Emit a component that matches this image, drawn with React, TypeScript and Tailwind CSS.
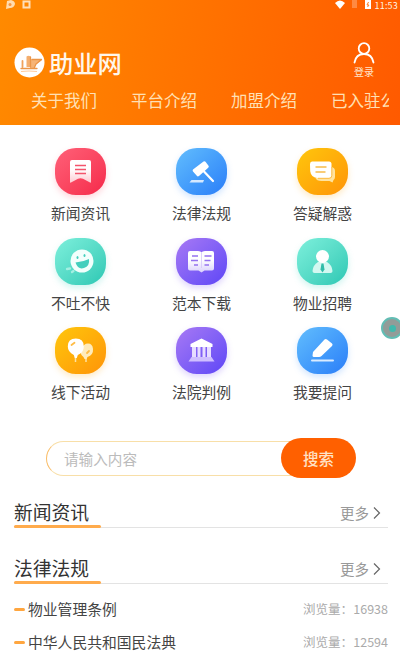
import type { ReactNode } from 'react';

const navItems = ['关于我们', '平台介绍', '加盟介绍', '已入驻公'];

const RED = 'bg-linear-to-br from-[#ff5f78] to-[#f5264a] shadow-[0_3px_6px_#ff5f7840]';
const BLUE = 'bg-linear-to-br from-[#62bdfd] to-[#2b7df8] shadow-[0_3px_6px_#4a9dff40]';
const YELLOW = 'bg-linear-to-br from-[#ffc60c] to-[#ff9408] shadow-[0_3px_6px_#ffb02040]';
const TEAL = 'bg-linear-to-br from-[#7cf0dc] to-[#28c8b4] shadow-[0_3px_6px_#48d8c440]';
const PURPLE = 'bg-linear-to-br from-[#a878f4] to-[#6044f6] shadow-[0_3px_6px_#8058f840]';

type Entry = { label: string; tone: string; art: ReactNode };

const entries: Entry[] = [
  {
    label: '新闻资讯',
    tone: RED,
    art: (
      <>
        <path d="M15 14q0-2 2-2h17q2 0 2 2v20q0 1-1 .4l-7-3.6q-2.500-1-5 0l-7 3.600q-1 .6-1-.4z" fill="url(#fade)" />
        <path d="M20 17.500h11M20 21.500h11M20 25.500h11" stroke="#f4546c" strokeWidth="1.300" />
      </>
    ),
  },
  {
    label: '法律法规',
    tone: BLUE,
    art: (
      <>
        <path d="M17 21.500 27.500 13.500q1.200-.8 2 .3l3 4q.8 1.200-.3 2L23 28q-1.300 1-2.200-.2L17 23.500q-.8-1 0-2z" fill="#fff" />
        <path d="m28 23.500 9 9.500" stroke="#fff" strokeWidth="2.200" strokeLinecap="round" />
        <path d="M15.500 32H28l-1 2.500H13.500z" fill="#d5e9ff" />
      </>
    ),
  },
  {
    label: '答疑解惑',
    tone: YELLOW,
    art: (
      <>
        <path d="M35 19q3 1 3 4v6q0 2-1.500 3l-1 2.500-3-1.500h-8q-5 0-6-3z" fill="#ffe3a0" />
        <path d="M15 13.500h17q2.500 0 2.500 2.500v11.500q0 2.500-2.500 2.500H21q-7 0-7.800-7L13 16q0-2.500 2-2.500z" fill="#fff" />
        <path d="M34.800 19v8.500q0 2.800-2.800 2.800H21" stroke="#fbb02a" strokeWidth=".8" />
        <path d="M18.500 19h11M18.500 24h10" stroke="#f8bc4a" strokeWidth="1.500" />
      </>
    ),
  },
  {
    label: '不吐不快',
    tone: TEAL,
    art: (
      <>
        <circle cx="27" cy="23" r="11.500" fill="#f2fffc" />
        <path d="M20.500 24.500q7-.3 13.500-3.500 1 7-5 9t-8.500-5.500z" fill="#43cfbd" />
        <ellipse cx="22.500" cy="19.500" rx="1" ry="1.500" fill="#43cfbd" />
        <ellipse cx="29.500" cy="17.500" rx="1" ry="1.500" fill="#43cfbd" />
        <path d="m12 31 3-.5M17 34l1.500-1" stroke="#a4efe2" strokeWidth="2.300" strokeLinecap="round" />
      </>
    ),
  },
  {
    label: '范本下载',
    tone: PURPLE,
    art: (
      <>
        <path d="M14 13h8q3 0 3.500 1.500Q26 13 29 13h7q2 0 2 2v15.500q0 2-2 2h-7.500l-3 2-3-2H14q-2 0-2-2V15q0-2 2-2z" fill="url(#fade)" />
        <path d="M16 18h6M15 22.500h7M18 27h4M28.500 18h7M28.500 22.500h6M28.500 27h4.500" stroke="#9572ef" strokeWidth="1.500" />
        <path d="M25.500 15v15" stroke="#d5c7fa" strokeWidth=".8" />
      </>
    ),
  },
  {
    label: '物业招聘',
    tone: TEAL,
    art: (
      <>
        <path d="M21 24h9q5 3 5.500 9 0 2-2 2h-16q-2 0-2-2 .5-6 5.500-9z" fill="#d3f8f1" />
        <circle cx="25.500" cy="18.500" r="6.500" fill="#fff" />
        <path d="m24.500 25.500-1 6 2 3 2-3-1-6z" fill="#31bca9" />
      </>
    ),
  },
  {
    label: '线下活动',
    tone: YELLOW,
    art: (
      <>
        <path d="M20.500 25v10M31 27v8" stroke="#ffe2a0" strokeWidth="1.500" />
        <path d="M38 22q.5 6-5.500 8l-1 2h-2l-1-2q-4-3-2-8 2-5.500 6.500-5.500t5 5.500z" fill="#ffebbb" />
        <path d="M28.800 19.500q0 6-6 8.500l-1 3h-2l-1-3q-6-3-6-8.500 0-8 8-8t8 8z" fill="#fff" />
        <path d="m16.500 18 3-2.200M32 26l2-2" stroke="#ffbc45" strokeWidth="1.800" strokeLinecap="round" />
      </>
    ),
  },
  {
    label: '法院判例',
    tone: PURPLE,
    art: (
      <>
        <path d="m25.500 11.500 11 5.500v3h-22v-3z" fill="#fff" />
        <path d="M16 20h4v10h-4zM21.500 20h3v10h-3zM26.500 20h3v10h-3zM31 20h4v10h-4z" fill="#e7ddff" />
        <path d="M15.500 30h20l3 4.500h-26z" fill="#cfbfff" />
      </>
    ),
  },
  {
    label: '我要提问',
    tone: BLUE,
    art: (
      <>
        <path d="m16 25 11.500-12.500q1.200-1.200 2.500 0l5 4q1.200 1.200 0 2.500L24.500 29q-1 1-2.500 1h-5q-1.500 0-1.500-1.500z" fill="#fff" />
        <path d="M15 33.500h21" stroke="#d9ebff" strokeWidth="2" strokeLinecap="round" />
      </>
    ),
  },
];

const articles = [
  { title: '物业管理条例', views: '16938' },
  { title: '中华人民共和国民法典', views: '12594' },
];

function StatusBar() {
  return (
    <div className="flex h-[11px] items-start justify-between pl-[5px] pr-[2px] text-[#fff3e4]">
      <svg width="28" height="10" viewBox="0 0 28 10">
        <path d="M2 1 6 0q4 1 4 4-1 4-5 4L1 9z" fill="#ffdcae" />
        <circle cx="5" cy="4.500" r="1.500" fill="#f79540" />
        <rect x="18.500" y="1.500" width="6" height="6" fill="none" stroke="#ffdfb8" strokeWidth="2" />
      </svg>
      <div className="flex items-start">
        <svg width="40" height="10" viewBox="0 0 40 10">
          <path d="M0 3q5-5 10 0L5 9z" fill="#fff" />
          <path d="M17 0h5v8h-5z" fill="#ff8a42" />
          <path d="M30 0h6v9h-6z" fill="#fff" />
          <path d="m33.500 2-1.500 3h2L32.500 7" stroke="#ff7a20" fill="none" />
        </svg>
        <span className="text-[9px] leading-[11px] tracking-[0.2px]">11:53</span>
      </div>
    </div>
  );
}

function Header() {
  return (
    <header className="flex h-[125px] flex-col bg-linear-[100deg] from-[#ff8a00] to-[#ff5a00]">
      <StatusBar />
      <div className="flex h-[73px] items-start justify-between pl-[14px] pr-[24px]">
        <div className="mt-[36px] flex items-center">
          <svg width="31" height="31" viewBox="0 0 31 31">
            <circle cx="15.500" cy="15.500" r="15" fill="#fff" />
            <path d="M8.500 14v6" stroke="#f0a25c" strokeWidth="1.800" strokeLinecap="round" />
            <path d="M12.500 9.500q2-1.500 4 0V20h-4z" fill="#f4ae6e" />
            <path d="M16.500 12.500 28 13l-6 4.500-2 3.500h-3z" fill="#f6b476" />
            <path d="M16.500 10v10M18 12.500h9.500L22 17l-2 4.500M7 21.500h16" stroke="#ec9648" strokeWidth="1.300" fill="none" strokeLinecap="round" strokeLinejoin="round" />
            <path d="M7 24.500q8-1 16 0" stroke="#ffcb9c" fill="none" />
          </svg>
          <h1 className="ml-[4px] text-[24.300px] font-medium leading-[31px] text-[#fff7eb]">助业网</h1>
        </div>
        <div className="mt-[31px] flex w-[24px] flex-col items-center">
          <svg width="22" height="22" viewBox="0 0 22 22" fill="none" stroke="#fff" strokeWidth="1.800" strokeLinecap="round">
            <circle cx="11" cy="6.500" r="5.300" />
            <path d="M1.500 20.500q1.500-8.500 9.500-8.500t9.500 8.500" />
          </svg>
          <span className="mt-[1px] whitespace-nowrap text-[10px] leading-[14px] text-[#ffe5cc]">登录</span>
        </div>
      </div>
      <nav className="ml-[31px] mr-[11px] flex gap-[34px] overflow-hidden text-[16.500px] leading-[33px] text-[#ffe0b5]">
        {navItems.map((item) => (
          <span key={item} className="w-[66px] shrink-0 whitespace-nowrap">{item}</span>
        ))}
      </nav>
    </header>
  );
}

function SectionHead({ title }: { title: string }) {
  return (
    <div className="relative flex h-[29px] items-start justify-between border-b border-[#e3e3e3]">
      <h2 className="text-[18.800px] leading-[26px] text-[#333]">{title}</h2>
      <div className="mr-[7px] mt-[3px] flex items-center text-[14.500px] leading-[22px] text-[#999]">
        更多
        <svg className="ml-[4px]" width="8" height="14" viewBox="0 0 8 14" fill="none" stroke="#666" strokeWidth="1.200">
          <path d="m1 1.500 5.500 5.500L1 12.500" />
        </svg>
      </div>
      <span className="absolute bottom-[-1px] left-0 h-[3px] w-[87px] rounded-full bg-[#ffab4c]" />
    </div>
  );
}

export default function App() {
  return (
    <div className="relative h-[666px] w-[400px] overflow-hidden bg-white font-['Noto_Sans_CJK_SC',sans-serif]">
      <svg width="0" height="0" className="absolute">
        <defs>
          <linearGradient id="fade" x1="0" y1="0" x2="0" y2="1">
            <stop offset=".4" stopColor="#fff" />
            <stop offset="1" stopColor="#fff" stopOpacity=".72" />
          </linearGradient>
        </defs>
      </svg>
      <Header />
      <main>
        <div className="ml-[20px] mt-[23px] grid w-[363px] grid-cols-3">
          {entries.map(({ label, tone, art }) => (
            <div key={label} className="flex h-[89.500px] flex-col items-center">
              <div className={`h-[47px] w-[51px] rounded-[21px] ${tone}`}>
                <svg width="51" height="47" viewBox="0 0 51 47" fill="none">{art}</svg>
              </div>
              <span className="mt-[7px] text-[14.800px] leading-[22px] text-[#444]">{label}</span>
            </div>
          ))}
        </div>
        <div className="ml-[46px] mt-[21.500px] flex h-[40px] w-[310px] items-center">
          <div className="mr-[-20px] h-[35px] flex-1 rounded-l-full border border-r-0 border-[#f8dfa8] border-l-[#f9bd68] pl-[17px] text-[14.600px] leading-[33px] text-[#bbb]">
            请输入内容
          </div>
          <button className="z-10 h-[40px] w-[75px] rounded-full bg-[#ff6000] text-[15.500px] font-medium leading-[38px] text-[#ffe2c6]">搜索</button>
        </div>
        <div className="ml-[14px] mr-[12px] mt-[21px]">
          <SectionHead title="新闻资讯" />
          <div className="mt-[27px]">
            <SectionHead title="法律法规" />
          </div>
          <ul className="mt-[9px]">
            {articles.map(({ title, views }) => (
              <li key={title} className="flex h-[33px] items-center">
                <span className="mr-[3px] h-[3px] w-[11px] rounded-full bg-[#ffa63f]" />
                <span className="text-[14.800px] text-[#444]">{title}</span>
                <span className="ml-auto flex text-[12.500px] text-[#aaa]">
                  浏览量：<span className="w-[35px] text-right">{views}</span>
                </span>
              </li>
            ))}
          </ul>
        </div>
      </main>
      <div className="absolute left-[381px] top-[317px] flex h-[22px] w-[22px] items-center justify-center rounded-full border-2 border-[#62bdb4] bg-[#929c98]">
        <span className="h-[7px] w-[7px] rounded-full bg-[#40b9ad]" />
      </div>
    </div>
  );
}
